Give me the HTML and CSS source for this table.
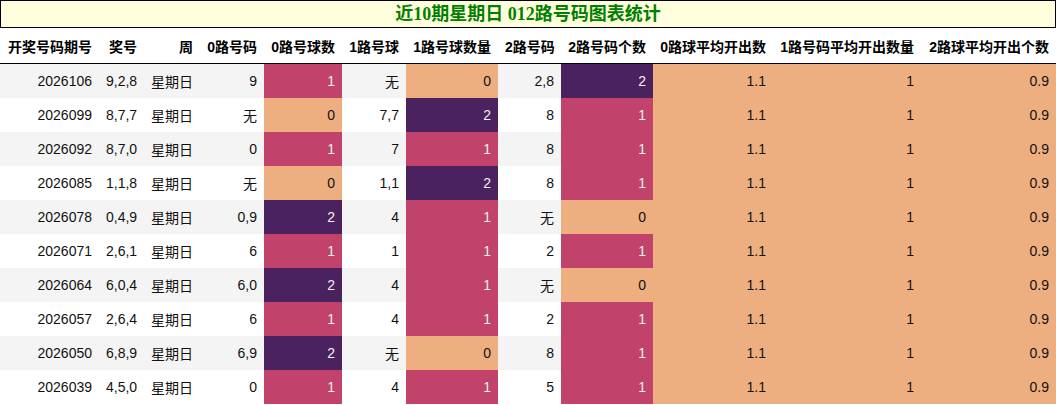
FILE: index.html
```html
<!DOCTYPE html>
<html lang="zh">
<head>
<meta charset="utf-8">
<title>近10期星期日 012路号码图表统计</title>
<link rel="stylesheet" href="styles.css">
</head>
<body>
<table class="stats">
  <caption class="title">近10期星期日 012路号码图表统计</caption>
  <colgroup>
    <col class="w-issue"><col class="w-num"><col class="w-week"><col class="w-r0"><col class="w-r0n">
    <col class="w-r1"><col class="w-r1n"><col class="w-r2"><col class="w-r2n"><col class="w-a0"><col class="w-a1"><col class="w-a2">
  </colgroup>
  <thead>
    <tr>
      <th>开奖号码期号</th><th>奖号</th><th>周</th><th>0路号码</th><th>0路号球数</th><th>1路号球</th><th>1路号球数量</th><th>2路号码</th><th>2路号码个数</th><th>0路球平均开出数</th><th>1路号码平均开出数量</th><th>2路球平均开出个数</th>
    </tr>
  </thead>
  <tbody>
    <tr class="odd"><td>2026106</td><td>9,2,8</td><td>星期日</td><td>9</td><td class="c1">1</td><td>无</td><td class="c0">0</td><td>2,8</td><td class="c2">2</td><td class="c0">1.1</td><td class="c0">1</td><td class="c0">0.9</td></tr>
    <tr><td>2026099</td><td>8,7,7</td><td>星期日</td><td>无</td><td class="c0">0</td><td>7,7</td><td class="c2">2</td><td>8</td><td class="c1">1</td><td class="c0">1.1</td><td class="c0">1</td><td class="c0">0.9</td></tr>
    <tr class="odd"><td>2026092</td><td>8,7,0</td><td>星期日</td><td>0</td><td class="c1">1</td><td>7</td><td class="c1">1</td><td>8</td><td class="c1">1</td><td class="c0">1.1</td><td class="c0">1</td><td class="c0">0.9</td></tr>
    <tr><td>2026085</td><td>1,1,8</td><td>星期日</td><td>无</td><td class="c0">0</td><td>1,1</td><td class="c2">2</td><td>8</td><td class="c1">1</td><td class="c0">1.1</td><td class="c0">1</td><td class="c0">0.9</td></tr>
    <tr class="odd"><td>2026078</td><td>0,4,9</td><td>星期日</td><td>0,9</td><td class="c2">2</td><td>4</td><td class="c1">1</td><td>无</td><td class="c0">0</td><td class="c0">1.1</td><td class="c0">1</td><td class="c0">0.9</td></tr>
    <tr><td>2026071</td><td>2,6,1</td><td>星期日</td><td>6</td><td class="c1">1</td><td>1</td><td class="c1">1</td><td>2</td><td class="c1">1</td><td class="c0">1.1</td><td class="c0">1</td><td class="c0">0.9</td></tr>
    <tr class="odd"><td>2026064</td><td>6,0,4</td><td>星期日</td><td>6,0</td><td class="c2">2</td><td>4</td><td class="c1">1</td><td>无</td><td class="c0">0</td><td class="c0">1.1</td><td class="c0">1</td><td class="c0">0.9</td></tr>
    <tr><td>2026057</td><td>2,6,4</td><td>星期日</td><td>6</td><td class="c1">1</td><td>4</td><td class="c1">1</td><td>2</td><td class="c1">1</td><td class="c0">1.1</td><td class="c0">1</td><td class="c0">0.9</td></tr>
    <tr class="odd"><td>2026050</td><td>6,8,9</td><td>星期日</td><td>6,9</td><td class="c2">2</td><td>无</td><td class="c0">0</td><td>8</td><td class="c1">1</td><td class="c0">1.1</td><td class="c0">1</td><td class="c0">0.9</td></tr>
    <tr><td>2026039</td><td>4,5,0</td><td>星期日</td><td>0</td><td class="c1">1</td><td>4</td><td class="c1">1</td><td>5</td><td class="c1">1</td><td class="c0">1.1</td><td class="c0">1</td><td class="c0">0.9</td></tr>
  </tbody>
</table>
</body>
</html>
```

FILE: styles.css
```css
html, body {
  margin: 0;
  padding: 0;
  background: #fff;
}

.stats {
  width: 1056px;
  table-layout: fixed;
  border-collapse: separate;
  border-spacing: 0;
  font-family: "Liberation Sans", "Noto Sans CJK SC", sans-serif;
  font-size: 14px;
  color: #111;
}

.title {
  caption-side: top;
  box-sizing: border-box;
  height: 28px;
  line-height: 26px;
  border: 1px solid #000;
  background: #ffffdd;
  color: #008000;
  font-family: "Liberation Serif", "Noto Sans CJK SC", serif;
  font-size: 18px;
  font-weight: bold;
  text-align: center;
}

.w-issue { width: 99px; }
.w-num { width: 45px; }
.w-week { width: 56px; }
.w-r0 { width: 64px; }
.w-r0n { width: 78px; }
.w-r1 { width: 64px; }
.w-r1n { width: 92px; }
.w-r2 { width: 63px; }
.w-r2n { width: 92px; }
.w-a0 { width: 120px; }
.w-a1 { width: 148px; }
.w-a2 { width: 135px; }

.stats th,
.stats td {
  padding: 0 7px;
  text-align: right;
  white-space: nowrap;
  overflow: hidden;
}

.stats th {
  height: 35px;
  font-weight: bold;
  color: #000;
  border-bottom: 1px solid #000;
  background: #fff;
}

.stats td {
  height: 34px;
}

.stats tr.odd td {
  background: #f4f4f4;
}

.stats tr td.c0 {
  background: #edaf80;
  color: #111;
}

.stats tr td.c1 {
  background: #c1426b;
  color: #f1f1f1;
}

.stats tr td.c2 {
  background: #4b2260;
  color: #f1f1f1;
}
```
